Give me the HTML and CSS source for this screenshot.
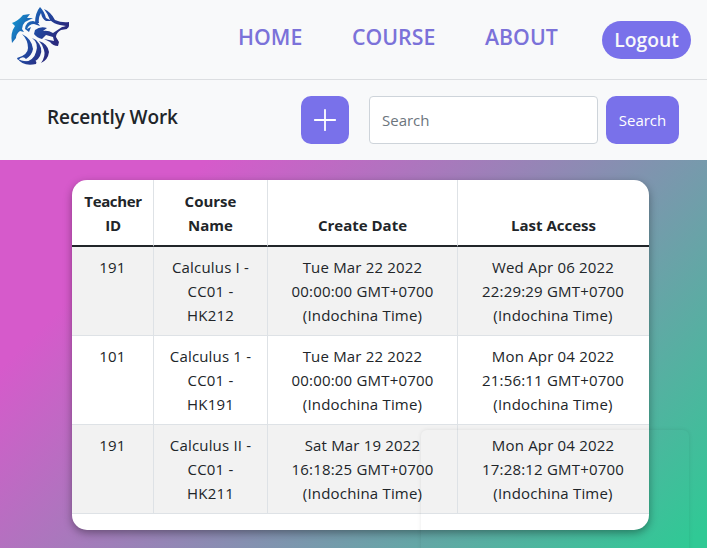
FILE: index.html
```html
<!DOCTYPE html>
<html lang="en">
<head>
<meta charset="utf-8">
<title>Recently Work</title>
<link rel="stylesheet" href="styles.css">
</head>
<body>
<header class="navbar">
  <a class="logo" href="#" aria-label="Home">
    <svg width="60" height="60" viewBox="0 0 60 60">
      <defs>
        <linearGradient id="wolf" gradientUnits="userSpaceOnUse" x1="2" y1="18" x2="42" y2="42">
          <stop offset="0" stop-color="#168fcb"/>
          <stop offset="0.45" stop-color="#1f4fa8"/>
          <stop offset="1" stop-color="#2a2a7e"/>
        </linearGradient>
      </defs>
      <g fill="url(#wolf)">
        <path d="M2 17 Q8 15 13 9 L20 8 L17 12 L23 12 L15 16 Q12 19 12 23 L14 26 L10 25 Q6 28 6 32 L2 37 Q0 27 5 20 Z"/>
        <path d="M25 17 Q25 7 30 1 Q34 5 36 12 L42 15 L36 15 Q32 13 31 7 Q28 12 29 17 Z"/>
        <path d="M34 3 Q41 6 45 14 Q52 17 59 16 L59 20 Q58 24 52 22 L56 20 L50 19 Q44 18 40 14 Q38 8 34 3 Z"/>
        <path d="M15 23 Q16 15 23 15 Q28 16 30 20 L24 18 Q19 18 17 23 L21 21 L19 26 Z"/>
        <path d="M25 24 Q30 20 37 22 L33 25 Q38 24 43 27 L52 21 L58 20 L57 23 L51 24 Q46 27 46 31 L49 36 L48 40 Q43 40 40 36 L34 33 L44 35 L43 31 L36 29 L32 33 Q27 32 24 28 Z"/>
        <path d="M12 28 Q22 33 23 43 Q22 49 16 53 Q13 49 8 54 L7 52 Q18 49 18 42 Q18 34 12 28 Z"/>
        <path d="M22 32 Q29 37 26 46 Q24 54 15 56 Q26 58 30 50 Q34 42 26 34 Z"/>
        <path d="M29 35 Q38 38 39 46 Q38 54 31 57 Q36 50 34 44 Q33 39 29 35 Z"/>
        <path d="M7 52 Q12 56 20 55 Q28 53 26 58 Q13 61 7 52 Z"/>
      </g>
    </svg>
  </a>
  <nav class="menu">
    <a class="home" href="#">HOME</a>
    <a class="course" href="#">COURSE</a>
    <a class="about" href="#">ABOUT</a>
  </nav>
  <button class="logout" type="button"><span>Logout</span></button>
</header>

<section class="toolbar">
  <h1><span>Recently Work</span></h1>
  <button class="add" type="button" aria-label="Add">
    <svg width="24" height="24" viewBox="0 0 24 24"><path d="M12 1.8V22.2M1.8 12H22.2" stroke="#fff" stroke-width="1.8" stroke-linecap="round"/></svg>
  </button>
  <input type="text" placeholder="Search">
  <button class="search" type="button">Search</button>
</section>

<main class="content">
  <div class="card">
    <table>
      <colgroup><col class="c1"><col class="c2"><col class="c3"><col class="c4"></colgroup>
      <thead>
        <tr><th class="narrow">Teacher<br>ID</th><th>Course<br>Name</th><th>Create Date</th><th>Last Access</th></tr>
      </thead>
      <tbody>
        <tr><td>191</td><td>Calculus I -<br>CC01 -<br>HK212</td><td>Tue Mar 22 2022<br>00:00:00 GMT+0700<br>(Indochina Time)</td><td>Wed Apr 06 2022<br>22:29:29 GMT+0700<br>(Indochina Time)</td></tr>
        <tr><td>101</td><td>Calculus 1 -<br>CC01 -<br>HK191</td><td>Tue Mar 22 2022<br>00:00:00 GMT+0700<br>(Indochina Time)</td><td>Mon Apr 04 2022<br>21:56:11 GMT+0700<br>(Indochina Time)</td></tr>
        <tr><td>191</td><td>Calculus II -<br>CC01 -<br>HK211</td><td>Sat Mar 19 2022<br>16:18:25 GMT+0700<br>(Indochina Time)</td><td>Mon Apr 04 2022<br>17:28:12 GMT+0700<br>(Indochina Time)</td></tr>
      </tbody>
    </table>
  </div>
</main>
<div class="popup-outline"></div>
</body>
</html>
```
FILE: styles.css
```css
* { box-sizing: border-box; }

body {
  margin: 0;
  height: 548px;
  overflow: hidden;
  display: flex;
  flex-direction: column;
  font: 400 15px/24px "Open Sans", "Noto Sans", sans-serif;
  color: #212529;
}

button { border: 0; padding: 0; color: #fff; background: #7971ea; font: inherit; }

.navbar {
  flex: none;
  height: 80px;
  display: flex;
  align-items: flex-start;
  background: #f8f9fa;
  border-bottom: 1px solid #dcdee1;
}

.logo { display: block; width: 60px; height: 60px; margin: 6px 0 0 10px; }
.logo svg { display: block; }

.menu { display: flex; margin: 21px 0 0 168px; width: 364px; }
.menu a {
  color: #7b72d9;
  font-size: 21.3px;
  font-weight: 600;
  line-height: 32px;
  text-decoration: none;
}
.home { width: 114px; }
.course { width: 133px; }

.logout {
  width: 89px;
  height: 38px;
  margin-top: 21px;
  border-radius: 19px;
  color: #f8f9fa;
  font-size: 19.3px;
  font-weight: 600;
}

.toolbar {
  flex: none;
  height: 80px;
  padding: 0 28px 0 47px;
  display: flex;
  align-items: center;
  background: #f8f9fa;
}
.toolbar h1 { width: 254px; margin: 0 0 6px; font-size: 19px; font-weight: 600; letter-spacing: -.1px; }
.add {
  width: 48px;
  height: 48px;
  display: grid;
  place-items: center;
  border-radius: 10px;
}
.toolbar input {
  width: 229px;
  height: 48px;
  margin: 0 8px 0 20px;
  padding: 0 12px;
  border: 1px solid #ced4da;
  border-radius: 4px;
  background: #fff;
  font: inherit;
}
.toolbar input::placeholder { color: #6c757d; opacity: 1; }
.search { width: 73px; height: 48px; border-radius: 10px; }

.content {
  flex: 1;
  padding: 20px 58px 0 72px;
  background: linear-gradient(135deg, #d65acb 0%, #d65acb 19%, #30c995 98%);
}
.card {
  width: 577px;
  height: 350px;
  overflow: hidden;
  border-radius: 15px;
  background: #fff;
  box-shadow: 0 3px 9px rgba(0, 0, 0, .36);
}

table { width: 577px; table-layout: fixed; border-collapse: separate; border-spacing: 0; text-align: center; }
.c1 { width: 82px; }
.c2 { width: 114px; }
.c3 { width: 190px; }
th, td { padding: 8px 0; border-right: 1px solid #dee2e6; border-bottom: 1px solid #dee2e6; }
th:last-child, td:last-child { border-right: 0; }
th { height: 67px; padding: 9px 0 8px; font-weight: 700; vertical-align: bottom; border-bottom: 2px solid #212529; }
th.narrow { padding-left: 1px; letter-spacing: -.35px; }
td { height: 89px; vertical-align: top; letter-spacing: .18px; }
td:last-child { padding-right: 1px; }
tbody tr:nth-child(odd) { background: #f2f2f2; }

.popup-outline {
  position: absolute;
  left: 421px;
  top: 430px;
  width: 268px;
  height: 128px;
  border-radius: 6px 6px 0 0;
  box-shadow: 0 0 4px rgba(0, 0, 0, .09);
}
```
